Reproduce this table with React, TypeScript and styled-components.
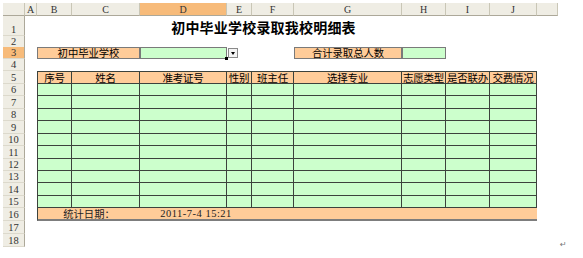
import React from "react";
import styled, { createGlobalStyle } from "styled-components";

// column widths: row header, A..K, then a spare column for the paragraph mark
const COLS = [22, 12, 35, 68, 87, 25, 42, 108, 44, 44, 47, 21, 25];
const LETTERS = ["A", "B", "C", "D", "E", "F", "G", "H", "I", "J", ""];
const SELECTED_COL = "D";

const ORANGE = "#ffcc99";
const GREEN = "#ccffcc";
const LINE = "#3c423c";
const HEAD_BG = "#efede4";

const GlobalStyle = createGlobalStyle`
  html, body { margin: 0; padding: 0; background: #fff; }
  body {
    font-family: "Noto Sans CJK SC", "Liberation Sans", sans-serif;
    color: #000;
  }
`;

const Sheet = styled.div`
  display: flex;
  flex-direction: column;
  padding: 3px 0 0 3px;
`;

const Row = styled.div<{ $h: number }>`
  display: grid;
  grid-template-columns: ${COLS.map((c) => `${c}px`).join(" ")};
  height: ${(p) => p.$h}px;
`;

const Corner = styled.div`
  background: ${HEAD_BG};
  border-right: 1px solid #c9c6b6;
  border-bottom: 1px solid #aca899;
  box-sizing: border-box;
`;

const ColHead = styled.div<{ $sel?: boolean }>`
  background: ${(p) => (p.$sel ? "#f7bb7a" : HEAD_BG)};
  border-right: 1px solid #c9c6b6;
  border-bottom: 1px solid #aca899;
  box-sizing: border-box;
  font-family: "Liberation Serif", serif;
  font-size: 10px;
  color: #333;
  display: flex;
  align-items: center;
  justify-content: center;
`;

const RowHead = styled.div<{ $sel?: boolean }>`
  background: ${(p) => (p.$sel ? "#f7bb7a" : HEAD_BG)};
  border-right: 1px solid #aca899;
  border-bottom: 1px solid #dcd9cc;
  box-sizing: border-box;
  font-family: "Liberation Serif", serif;
  font-size: 10.5px;
  color: #333;
  display: flex;
  align-items: flex-end;
  justify-content: center;
  line-height: 11px;
`;

const Blank = styled.div<{ $span?: number }>`
  grid-column: span ${(p) => p.$span ?? 1};
`;

const Title = styled.div<{ $span: number }>`
  grid-column: span ${(p) => p.$span};
  display: flex;
  align-items: flex-end;
  justify-content: center;
  font-size: 14px;
  font-weight: 700;
  line-height: 16px;
  padding-bottom: 1px;
  letter-spacing: 0.2px;
`;

const Box = styled.div<{ $span?: number; $fill: string }>`
  grid-column: span ${(p) => p.$span ?? 1};
  position: relative;
  background: ${(p) => p.$fill};
  border: 1px solid #7a7a7a;
  box-sizing: border-box;
  font-size: 10.3px;
  line-height: 10px;
  display: flex;
  align-items: center;
  justify-content: center;
  white-space: nowrap;
`;

const Handle = styled.span`
  position: absolute;
  right: -2px;
  bottom: -2px;
  width: 3px;
  height: 3px;
  background: #000;
`;

const DropCell = styled.div`
  display: flex;
  align-items: center;
  padding-left: 1px;
`;

const DropButton = styled.div`
  width: 10px;
  height: 10px;
  box-sizing: border-box;
  border: 1px solid #8a8a8a;
  background: #f4f4f4;
  display: flex;
  align-items: center;
  justify-content: center;

  &::after {
    content: "";
    border-left: 2.5px solid transparent;
    border-right: 2.5px solid transparent;
    border-top: 3px solid #000;
    margin-top: 1px;
  }
`;

const TCell = styled.div<{ $span?: number; $fill: string; $first?: boolean; $top?: boolean }>`
  grid-column: span ${(p) => p.$span ?? 1};
  background: ${(p) => p.$fill};
  border-right: 1px solid ${LINE};
  border-bottom: 1px solid ${LINE};
  border-left: ${(p) => (p.$first ? `1px solid ${LINE}` : "none")};
  border-top: ${(p) => (p.$top ? `1px solid ${LINE}` : "none")};
  box-sizing: border-box;
  font-size: 10.5px;
  line-height: 11px;
  display: flex;
  align-items: flex-end;
  justify-content: center;
  white-space: nowrap;
  overflow: hidden;
  letter-spacing: -0.2px;
`;

const FootCell = styled.div<{ $span?: number; $first?: boolean; $mono?: boolean }>`
  grid-column: span ${(p) => p.$span ?? 1};
  background: ${ORANGE};
  border-bottom: 2px solid #7d7d7d;
  border-left: ${(p) => (p.$first ? `1px solid ${LINE}` : "none")};
  box-sizing: border-box;
  font-family: ${(p) =>
    p.$mono ? `"Liberation Serif", serif` : `"Noto Sans CJK SC", sans-serif`};
  font-size: ${(p) => (p.$mono ? "10.5px" : "10.3px")};
  letter-spacing: ${(p) => (p.$mono ? "0.5px" : "0")};
  line-height: 11px;
  display: flex;
  align-items: center;
  justify-content: center;
  white-space: nowrap;
  color: #222;
`;

const Mark = styled.div`
  display: flex;
  align-items: flex-end;
  justify-content: flex-start;
  padding-left: 2px;
  font-family: "DejaVu Sans", sans-serif;
  font-size: 8px;
  color: #777;
  line-height: 9px;
  transform: translateY(2px);
`;

const HEADERS = [
  "序号",
  "姓名",
  "准考证号",
  "性别",
  "班主任",
  "选择专业",
  "志愿类型",
  "是否联办",
  "交费情况",
];

const BODY_HEIGHTS = [12, 13, 12, 13, 12, 13, 12, 12, 13, 12];

export default function App() {
  return (
    <>
      <GlobalStyle />
      <Sheet>
        <Row $h={13}>
          <Corner />
          {LETTERS.map((l, i) => (
            <ColHead key={i} $sel={l === SELECTED_COL}>
              {l}
            </ColHead>
          ))}
        </Row>

        <Row $h={20}>
          <RowHead>1</RowHead>
          <Blank />
          <Title $span={8}>初中毕业学校录取我校明细表</Title>
        </Row>

        <Row $h={11}>
          <RowHead>2</RowHead>
        </Row>

        <Row $h={12}>
          <RowHead $sel>3</RowHead>
          <Blank />
          <Box $span={2} $fill={ORANGE}>
            初中毕业学校
          </Box>
          <Box $fill={GREEN}>
            <Handle />
          </Box>
          <DropCell>
            <DropButton />
          </DropCell>
          <Blank />
          <Box $fill={ORANGE}>合计录取总人数</Box>
          <Box $fill={GREEN} />
        </Row>

        <Row $h={12}>
          <RowHead>4</RowHead>
        </Row>

        <Row $h={13}>
          <RowHead>5</RowHead>
          <Blank />
          {HEADERS.map((h, i) => (
            <TCell key={h} $fill={ORANGE} $first={i === 0} $top>
              {h}
            </TCell>
          ))}
        </Row>

        {BODY_HEIGHTS.map((h, r) => (
          <Row key={r} $h={h}>
            <RowHead>{r + 6}</RowHead>
            <Blank />
            {HEADERS.map((_, i) => (
              <TCell key={i} $fill={GREEN} $first={i === 0} />
            ))}
          </Row>
        ))}

        <Row $h={13}>
          <RowHead>16</RowHead>
          <Blank />
          <FootCell $span={2} $first>
            统计日期：
          </FootCell>
          <FootCell $span={2} $mono>
            2011-7-4 15:21
          </FootCell>
          <FootCell $span={5} />
        </Row>

        <Row $h={13}>
          <RowHead>17</RowHead>
        </Row>

        <Row $h={13}>
          <RowHead>18</RowHead>
          <Blank $span={11} />
          <Mark>↵</Mark>
        </Row>
      </Sheet>
    </>
  );
}
